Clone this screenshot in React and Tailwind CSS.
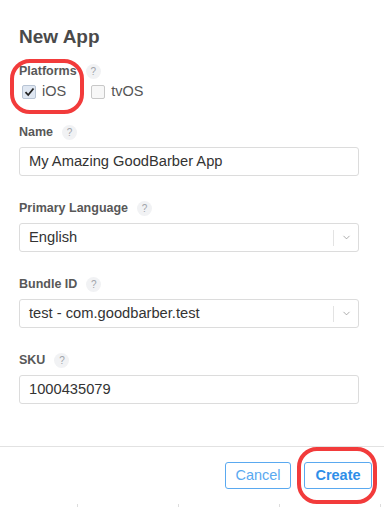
import { ChevronDown } from 'lucide-react'

function Help() {
  return (
    <span className="ml-[9px] inline-flex h-[15px] w-[15px] items-center justify-center rounded-full bg-[#f1f2f4] text-[10px] font-normal text-[#a0a4aa]">?</span>
  )
}

function Label({ children }) {
  return (
    <div className="flex h-[16px] items-center text-[12.5px] font-semibold text-[#585858]">
      {children}
      <Help />
    </div>
  )
}

function Field({ label, children }) {
  return (
    <div className="flex flex-col gap-[7px]">
      <Label>{label}</Label>
      {children}
    </div>
  )
}

function TextBox({ value }) {
  return (
    <div className="flex h-[29px] items-center rounded-[3px] border border-[#dcdcdc] px-[9px] text-[14.7px] text-[#333]">{value}</div>
  )
}

function SelectBox({ value }) {
  return (
    <div className="flex h-[29px] items-center rounded-[3px] border border-[#dcdcdc] text-[14.7px] text-[#333]">
      <span className="flex-1 px-[9px]">{value}</span>
      <span className="h-[16px] w-px bg-[#e3e3e3]" />
      <span className="flex w-[24px] justify-center text-[#888]"><ChevronDown size={11} strokeWidth={1.5} /></span>
    </div>
  )
}

function Check({ checked, label }) {
  return (
    <label className="flex h-[18px] items-center gap-[6px] text-[14.5px] text-[#555]">
      <span className={`flex h-[14px] w-[14px] items-center justify-center rounded-[2px] border ${checked ? 'border-[#b8c4d4] bg-[#dfe7f2]' : 'border-[#c8c8c8] bg-[#f7f7f7]'}`}>
        {checked && (
          <svg width="11" height="10" viewBox="0 0 11 10"><path d="M1.5 5.2 L4.2 8 L9.5 1.5" fill="none" stroke="#222" strokeWidth="1.8" /></svg>
        )}
      </span>
      {label}
    </label>
  )
}

export default function App() {
  return (
    <div className="relative h-[507px] w-[384px] overflow-hidden bg-white font-['Liberation_Sans',Arial,sans-serif]">
      <div className="pl-[19px] pr-[25px] pt-[26px]">
        <h1 className="text-[19px] font-semibold leading-[22px] text-[#4a4a4a]">New App</h1>

        <div className="mt-[15px]">
          <Label>Platforms</Label>
          <div className="mt-[4px] flex gap-[25px] pl-[3px]">
            <Check checked label="iOS" />
            <Check label="tvOS" />
          </div>
        </div>

        <div className="mt-[23px] flex flex-col gap-[24px]">
          <Field label="Name"><TextBox value="My Amazing GoodBarber App" /></Field>
          <Field label="Primary Language"><SelectBox value="English" /></Field>
          <Field label="Bundle ID"><SelectBox value="test - com.goodbarber.test" /></Field>
          <Field label="SKU"><TextBox value="1000435079" /></Field>
        </div>
      </div>

      <div className="mt-[42px] border-t border-[#e2e2e2]">
        <div className="flex justify-end gap-[13px] pr-[12px] pt-[15px]">
          <button className="h-[27px] w-[66px] rounded-[3px] border border-[#5aa9f0] text-[14.5px] text-[#5aa9f0]">Cancel</button>
          <button className="h-[27px] w-[68px] rounded-[3px] border border-[#5aa9f0] text-[14.5px] font-bold text-[#2f8ee8]">Create</button>
        </div>
      </div>

      <div className="absolute bottom-0 left-0 flex w-full justify-between pl-[77px] pr-[3px]">
        <span className="h-[3px] w-px bg-[#ddd]" />
        <span className="h-[3px] w-px bg-[#ddd]" />
        <span className="h-[3px] w-px bg-[#ddd]" />
        <span className="h-[3px] w-px bg-[#ddd]" />
      </div>

      <div className="absolute left-[10px] top-[59px] h-[55px] w-[74px] rounded-[20px] border-[4px] border-[#f23b3b]" />
      <div className="absolute left-[297px] top-[447px] h-[57px] w-[80px] rounded-[20px] border-[4px] border-[#f23b3b]" />
    </div>
  )
}
